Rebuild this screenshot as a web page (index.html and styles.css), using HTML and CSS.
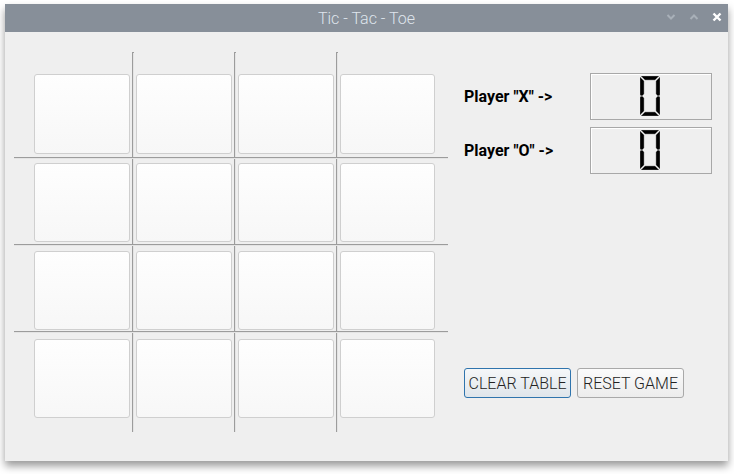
FILE: index.html
```html
<!DOCTYPE html>
<html>
<head>
<meta charset="utf-8">
<link rel="stylesheet" href="styles.css">
</head>
<body>
<div class="window">
  <div class="titlebar">
    <span class="title">Tic - Tac - Toe</span>
    <div class="controls">
      <svg class="ctl" width="10" height="8" viewBox="0 0 10 8"><path d="M1.5 2 L5 5.5 L8.5 2" fill="none" stroke="#a8b0b8" stroke-width="2"/></svg>
      <svg class="ctl" width="10" height="8" viewBox="0 0 10 8"><path d="M1.5 6 L5 2.5 L8.5 6" fill="none" stroke="#a8b0b8" stroke-width="2"/></svg>
      <svg class="ctl" width="10" height="10" viewBox="0 0 10 10"><path d="M1.5 1.5 L8.5 8.5 M8.5 1.5 L1.5 8.5" fill="none" stroke="#ffffff" stroke-width="2.4"/></svg>
    </div>
  </div>
  <div class="content">
    <div class="board">
      <div class="vline v1"></div>
      <div class="vline v2"></div>
      <div class="vline v3"></div>
      <div class="hline h1"></div>
      <div class="hline h2"></div>
      <div class="hline h3"></div>

      <button class="cell r1 c1"></button><button class="cell r1 c2"></button><button class="cell r1 c3"></button><button class="cell r1 c4"></button>
      <button class="cell r2 c1"></button><button class="cell r2 c2"></button><button class="cell r2 c3"></button><button class="cell r2 c4"></button>
      <button class="cell r3 c1"></button><button class="cell r3 c2"></button><button class="cell r3 c3"></button><button class="cell r3 c4"></button>
      <button class="cell r4 c1"></button><button class="cell r4 c2"></button><button class="cell r4 c3"></button><button class="cell r4 c4"></button>
    </div>
    <div class="side">
      <div class="score-row">
        <span class="label">Player "X" -&gt;</span>
        <div class="lcd">
          <svg class="digit" width="20" height="40" viewBox="0 0 20 40">
            <g fill="#000" stroke="#8a8a8a" stroke-width="0.5">
              <polygon points="1,0 19,0 15,4 5,4"/>
              <polygon points="20,1 20,19 18,20 16,18 16,5"/>
              <polygon points="20,21 20,39 16,35 16,22 18,20"/>
              <polygon points="1,40 19,40 15,36 5,36"/>
              <polygon points="0,21 0,39 4,35 4,22 2,20"/>
              <polygon points="0,1 0,19 2,20 4,18 4,5"/>
            </g>
          </svg>
        </div>
      </div>
      <div class="score-row">
        <span class="label">Player "O" -&gt;</span>
        <div class="lcd">
          <svg class="digit" width="20" height="40" viewBox="0 0 20 40">
            <g fill="#000" stroke="#8a8a8a" stroke-width="0.5">
              <polygon points="1,0 19,0 15,4 5,4"/>
              <polygon points="20,1 20,19 18,20 16,18 16,5"/>
              <polygon points="20,21 20,39 16,35 16,22 18,20"/>
              <polygon points="1,40 19,40 15,36 5,36"/>
              <polygon points="0,21 0,39 4,35 4,22 2,20"/>
              <polygon points="0,1 0,19 2,20 4,18 4,5"/>
            </g>
          </svg>
        </div>
      </div>
      <div class="buttons">
        <button class="btn focused">CLEAR TABLE</button>
        <button class="btn">RESET GAME</button>
      </div>
    </div>
  </div>
</div>
</body>
</html>
```

FILE: styles.css
```css
html, body {
  margin: 0;
  padding: 0;
  background: #ffffff;
}
body {
  width: 734px;
  height: 474px;
  overflow: hidden;
  font-family: Roboto, "Liberation Sans", sans-serif;
}
.window {
  margin: 4px 0 0 5px;
  width: 723px;
  height: 457px;
  background: #efefef;
  box-shadow: 0 5px 8px rgba(0, 0, 0, 0.4);
  display: flex;
  flex-direction: column;
}
.titlebar {
  height: 28px;
  background: #878f99;
  display: flex;
  align-items: center;
  justify-content: center;
  position: relative;
}
.title {
  color: #dfe5ec;
  font-weight: 300;
  font-size: 16px;
}
.controls {
  position: absolute;
  right: 6px;
  top: 8px;
  display: flex;
  align-items: center;
  gap: 13px;
}
.ctl {
  display: block;
}
.content {
  flex: 1;
  display: flex;
  align-items: flex-start;
}
.board {
  margin: 20px 0 0 9px;
  display: grid;
  grid-template-columns: 20px 96px 6px 96px 6px 96px 6px 95px 13px;
  grid-template-rows: 22px 80px 9px 79px 9px 79px 9px 79px 14px;
}
.cell {
  margin: 0;
  padding: 0;
  border: 1px solid #cfcfcf;
  border-radius: 3px;
  background: linear-gradient(#fefefe, #f7f7f7);
}
.r1 { grid-row: 2; }
.r2 { grid-row: 4; }
.r3 { grid-row: 6; }
.r4 { grid-row: 8; }
.c1 { grid-column: 2; }
.c2 { grid-column: 4; }
.c3 { grid-column: 6; }
.c4 { grid-column: 8; }
.vline {
  grid-row: 1 / -1;
  width: 2px;
  margin-left: 2px;
  box-sizing: border-box;
  border-left: 1px solid #9c9c9c;
  border-top: 1px solid #9c9c9c;
  background: #e4e4e4;
}
.v1 { grid-column: 3; }
.v2 { grid-column: 5; }
.v3 { grid-column: 7; }
.hline {
  grid-column: 1 / -1;
  height: 2px;
  box-sizing: border-box;
  border-top: 1px solid #9c9c9c;
  background: #e4e4e4;
}
.h1 { grid-row: 3; margin-top: 3px; }
.h2 { grid-row: 5; margin-top: 2px; }
.h3 { grid-row: 7; margin-top: 1px; }
.side {
  margin: 41px 0 0 16px;
  display: flex;
  flex-direction: column;
}
.score-row {
  display: flex;
  align-items: center;
  margin-bottom: 7px;
}
.label {
  width: 126px;
  font-weight: 700;
  font-size: 16px;
  color: #000;
}
.lcd {
  width: 122px;
  height: 47px;
  box-sizing: border-box;
  border: 1px solid #a8a8a8;
  box-shadow: inset 1px 1px 0 #ffffff;
  display: flex;
  align-items: center;
  justify-content: center;
  padding-right: 3px;
  padding-bottom: 2px;
}
.digit {
  display: block;
}
.buttons {
  margin-top: 187px;
  display: flex;
  gap: 6px;
}
.btn {
  width: 107px;
  height: 30px;
  margin: 0;
  padding: 0;
  font-family: Roboto, "Liberation Sans", sans-serif;
  font-weight: 300;
  font-size: 16px;
  color: #222;
  border: 1px solid #a9a9a9;
  border-radius: 3px;
  background: linear-gradient(#fbfbfb, #ececec);
}
.btn.focused {
  border-color: #2f74ad;
  background: linear-gradient(#f5f7f8, #dfe5ea);
}
```
